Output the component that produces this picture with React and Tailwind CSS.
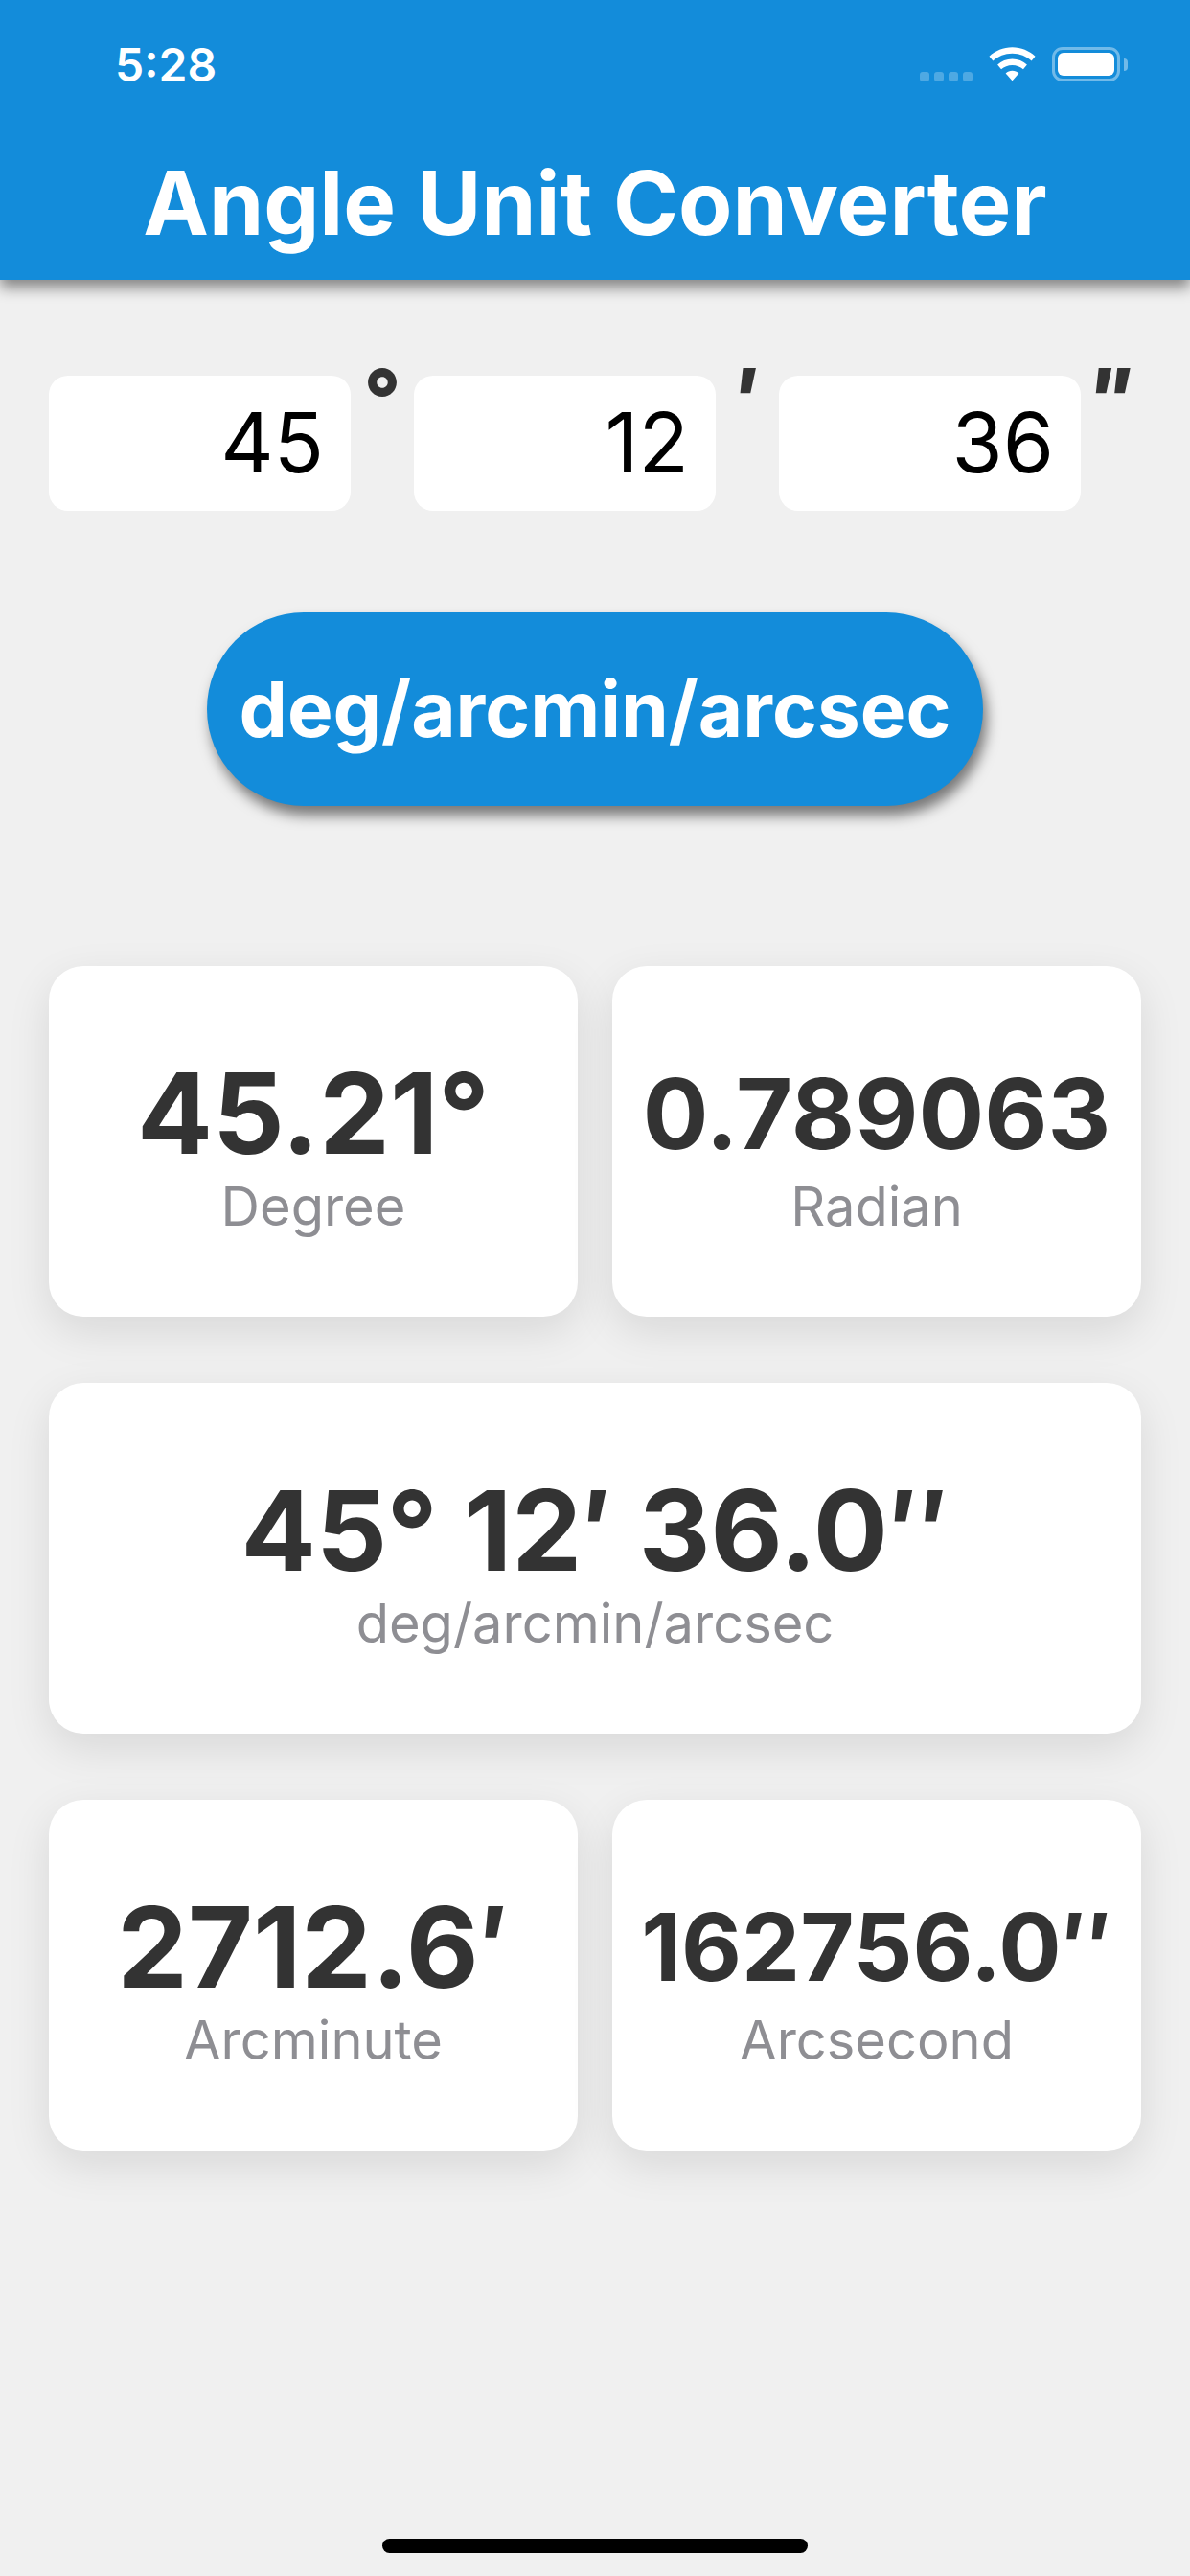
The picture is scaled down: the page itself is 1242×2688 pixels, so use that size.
import React from 'react';

const font = { fontFamily: 'Inter, "Liberation Sans", sans-serif' };

const WifiIcon = () => (
  <svg width="49" height="36" viewBox="0 0 50 36" fill="#fff">
    <path d="M25 0C15.5 0 7 3.7 0.5 9.6L4.5 14.5C10 9.5 17 6.5 25 6.5S40 9.5 45.5 14.5L49.5 9.6C43 3.7 34.5 0 25 0Z" />
    <path d="M25 12.5C19 12.5 13.5 14.8 9.3 18.5L13.3 23.4C16.3 20.7 20.5 19 25 19S33.7 20.7 36.7 23.4L40.7 18.5C36.5 14.8 31 12.5 25 12.5Z" />
    <path d="M25 25C22.3 25 20 26 18 27.6L25 35.5L32 27.6C30 26 27.7 25 25 25Z" />
  </svg>
);

const StatusBar = () => (
  <div className="h-[162px] pl-[120px] pr-[65px] flex items-start justify-between">
    <span className="mt-[41px] text-[48px] leading-[54px] font-semibold text-white">5:28</span>
    <div className="mt-[49px] flex items-end">
      <div className="flex gap-[5px] mr-[17px]">
        <div className="w-[10px] h-[10px] rounded-[3px] bg-white/25" />
        <div className="w-[10px] h-[10px] rounded-[3px] bg-white/25" />
        <div className="w-[10px] h-[10px] rounded-[3px] bg-white/25" />
        <div className="w-[10px] h-[10px] rounded-[3px] bg-white/25" />
      </div>
      <WifiIcon />
      <div className="ml-[17px] w-[71px] h-[36px] border-[3px] border-white/40 rounded-[11px] p-[3px]">
        <div className="w-full h-full bg-white rounded-[6px]" />
      </div>
      <div className="w-[4px] h-[13px] mb-[11px] ml-[4px] bg-white/40 rounded-r-full" />
    </div>
  </div>
);

const DmsInput = ({ value, unit }) => (
  <div className="flex items-start">
    <div className="w-[315px] h-[141px] bg-white rounded-[20px] flex items-center justify-end pr-[28px] text-[86px] text-black">
      {value}
    </div>
    <div className="w-[66px] h-[60px] -mt-[19px] pr-[8px] flex justify-center text-[84px] leading-[84px] font-extrabold italic text-[#333]">
      {unit}
    </div>
  </div>
);

const ResultCard = ({ value, label, size, wide }) => (
  <div className={`${wide ? 'w-[1140px]' : 'w-[552px]'} h-[366px] bg-white rounded-[36px] shadow-[0_15px_45px_rgba(0,0,0,0.1)] flex flex-col items-center justify-center pt-[15px]`}>
    <div className={`${size} h-[121px] leading-[116px] font-bold text-[#333] whitespace-nowrap`}>{value}</div>
    <div className="text-[56px] leading-[68px] text-[#8e8e93]">{label}</div>
  </div>
);

export default function App() {
  return (
    <div style={font} className="w-[1242px] h-[2688px] bg-[#f0f0f0] flex flex-col overflow-hidden">
      <div className="h-[292px] bg-[#138cda] shadow-[0_8px_14px_rgba(0,0,0,0.45)]">
        <StatusBar />
        <h1 className="text-center text-[92px] leading-[100px] font-bold text-white">Angle Unit Converter</h1>
      </div>

      <div className="mt-[100px] pl-[51px] flex">
        <DmsInput value="45" unit="°" />
        <DmsInput value="12" unit="'" />
        <DmsInput value="36" unit={'"'} />
      </div>

      <div className="mt-[106px] flex justify-center">
        <div className="w-[810px] h-[202px] rounded-[101px] bg-[#138cda] shadow-[4px_10px_14px_rgba(0,0,0,0.5)] flex items-center justify-center text-[80px] font-bold text-white">
          deg/arcmin/arcsec
        </div>
      </div>

      <div className="mt-[167px] px-[51px] flex flex-col gap-[69px]">
        <div className="flex justify-between">
          <ResultCard value="45.21°" label="Degree" size="text-[117px]" />
          <ResultCard value="0.789063" label="Radian" size="text-[102px]" />
        </div>
        <ResultCard value="45° 12′ 36.0″" label="deg/arcmin/arcsec" size="text-[116px]" wide />
        <div className="flex justify-between">
          <ResultCard value="2712.6′" label="Arcminute" size="text-[117px]" />
          <ResultCard value="162756.0″" label="Arcsecond" size="text-[97px]" />
        </div>
      </div>

      <div className="mt-auto mb-[24px] self-center w-[444px] h-[15px] rounded-full bg-black" />
    </div>
  );
}
